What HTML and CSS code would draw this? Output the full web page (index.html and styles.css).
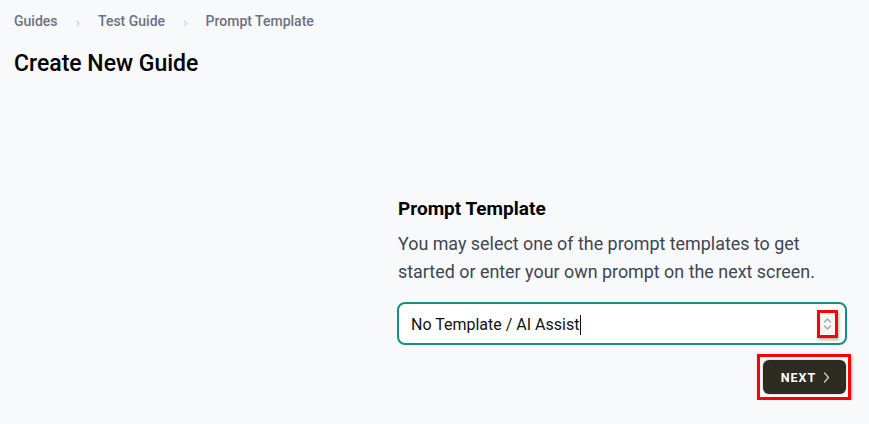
FILE: index.html
```html
<!DOCTYPE html>
<html>
<head>
    <meta name="viewport" content="width=device-width, initial-scale=1.0">
    <title>Create New Guide</title>
    <link rel="stylesheet" href="styles.css">
</head>
<body>
    <div class="page">
        <nav class="crumbs">
            <a href="#">Guides</a>
            <span class="sep">›</span>
            <a href="#">Test Guide</a>
            <span class="sep">›</span>
            <span class="current">Prompt Template</span>
        </nav>

        <h1>Create New Guide</h1>

        <div class="layout">
            <div class="panel">
                <h2>Prompt Template</h2>
                <p>You may select one of the prompt templates to get started or enter your own prompt on the next screen.</p>

                <div class="select">
                    <span class="value">No Template / AI Assist<span class="caret"></span></span>
                    <span class="arrows">
                        <svg width="9" height="14" viewBox="0 0 9 14" fill="none" stroke="#9ca3af" stroke-width="1.3" stroke-linecap="round" stroke-linejoin="round">
                            <path d="M1.5 5 L4.5 2 L7.5 5"/>
                            <path d="M1.5 9 L4.5 12 L7.5 9"/>
                        </svg>
                    </span>
                </div>

                <div class="actions">
                    <span class="highlight">
                        <button class="next-btn">NEXT
                            <svg width="7" height="11" viewBox="0 0 7 11" fill="none" stroke="#d6d3cc" stroke-width="1.2" stroke-linecap="round" stroke-linejoin="round">
                                <path d="M1.5 1 L5.5 5.5 L1.5 10"/>
                            </svg>
                        </button>
                    </span>
                </div>
            </div>
        </div>
    </div>
</body>
</html>
```

FILE: styles.css
```css
body {
    margin: 0;
    background: #f8f9fb;
    font-family: Roboto, "Liberation Sans", sans-serif;
    color: #111;
}

.page {
    padding: 11px 14px 0 14px;
}

.crumbs {
    display: flex;
    align-items: center;
    font-size: 14px;
    font-weight: 500;
    color: #6b7280;
    height: 20px;
}

.crumbs a {
    color: #6b7280;
    text-decoration: none;
}

.crumbs .sep {
    color: #cdd1d6;
    font-size: 15px;
    margin: 0 18px 0 18px;
    position: relative;
    top: 1px;
}

h1 {
    font-size: 23px;
    font-weight: 500;
    margin: 19px 0 0 0;
    color: #000;
}

.layout {
    display: flex;
    justify-content: flex-end;
    padding-right: 8px;
    margin-top: 121px;
}

.panel {
    width: 450px;
}

h2 {
    font-size: 19px;
    font-weight: 700;
    margin: 0 0 0 1px;
    color: #000;
    line-height: 22px;
}

p {
    font-size: 17.9px;
    line-height: 28px;
    color: #3f4551;
    margin: 10px 0 16px 1px;
}

.select {
    height: 43px;
    box-sizing: border-box;
    border: 2px solid #14907e;
    border-radius: 8px;
    background: #fff;
    display: flex;
    align-items: center;
    justify-content: space-between;
    padding: 0 7px 0 12px;
}

.value {
    font-size: 16px;
    color: #111;
    display: flex;
    align-items: center;
    position: relative;
    top: 1px;
}

.caret {
    display: inline-block;
    width: 1px;
    height: 20px;
    background: #111;
    margin-left: 1px;
}

.arrows {
    display: flex;
    align-items: center;
    justify-content: center;
    width: 15px;
    height: 22px;
    border: 3px solid #f00;
    background: #f4f5f7;
    box-shadow: 1px 2px 3px rgba(0, 0, 0, 0.3);
}

.actions {
    display: flex;
    justify-content: flex-end;
    margin-top: 9px;
    margin-right: -4px;
}

.highlight {
    display: flex;
    border: 3px solid #f00;
    padding: 3px 2px 3px 3px;
    box-shadow: 1px 2px 3px rgba(0, 0, 0, 0.3);
}

.next-btn {
    background: #2e2b21;
    color: #fff;
    border: none;
    border-radius: 6px;
    width: 83px;
    height: 34px;
    font-family: Roboto, "Liberation Sans", sans-serif;
    font-size: 12.5px;
    font-weight: 700;
    letter-spacing: 1px;
    display: flex;
    align-items: center;
    justify-content: center;
    gap: 7px;
    box-shadow: 0 0 0 1px rgba(0, 0, 0, 0.08);
    padding: 0 0 0 2px;
    cursor: pointer;
}
```
